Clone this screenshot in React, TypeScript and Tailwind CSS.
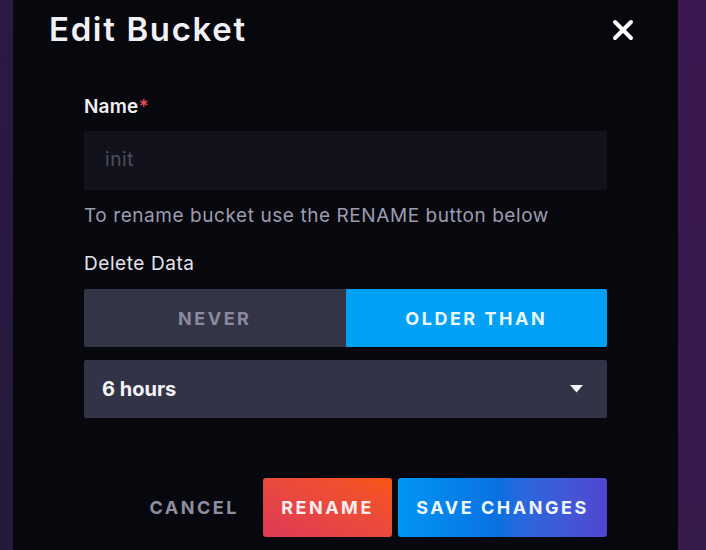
import { X } from 'lucide-react';

const font = { fontFamily: 'Inter, Roboto, "Liberation Sans", sans-serif' };

export default function App() {
  return (
    <div className="flex h-[550px] w-[706px] bg-[#07070e]" style={font}>
      <div className="w-[13px] bg-gradient-to-b from-[#2c1946] to-[#241a3a]" />
      <div className="flex w-[665px] flex-col bg-[#07070e]">
        <div className="flex h-[60px] items-center justify-between pl-[36px] pr-[39px]">
          <h1 className="text-[33px] font-semibold tracking-[0.05em] text-[#f1f1f5]">Edit Bucket</h1>
          <button className="text-white">
            <X className="h-[32px] w-[32px]" strokeWidth={3} />
          </button>
        </div>

        <div className="flex flex-col px-[71px] pt-[35px]">
          <label className="h-[24px] text-[19px] font-semibold leading-[24px] tracking-[0.01em] text-[#f1f1f5]">
            Name<span className="text-[#dc4e58]">*</span>
          </label>
          <div className="mt-[12px] flex h-[59px] items-center rounded-[2px] bg-[#12121c] px-[21px] text-[19px] tracking-[0.03em] text-[#4c4c5e]">
            init
          </div>
          <p className="mt-[14px] h-[24px] text-[19px] leading-[24px] tracking-[0.03em] text-[#9c9cae]">
            To rename bucket use the RENAME button below
          </p>
          <label className="mt-[24px] h-[24px] text-[19px] leading-[24px] tracking-[0.03em] text-[#e4e4ec]">
            Delete Data
          </label>
          <div className="mt-[13px] flex h-[58px] overflow-hidden rounded-[2px]">
            <button className="flex-1 bg-[#343447] text-[18px] font-bold tracking-[0.14em] text-[#8a8a9e]">
              NEVER
            </button>
            <button className="flex-1 bg-[#00a0f7] text-[18px] font-bold tracking-[0.14em] text-[#eaf7ff]">
              OLDER THAN
            </button>
          </div>
          <div className="mt-[13px] flex h-[58px] items-center justify-between rounded-[2px] bg-[#323347] pl-[18px] pr-[24px]">
            <span className="text-[20px] font-bold text-[#f4f4f8]">6 hours</span>
            <svg width="13" height="8" viewBox="0 0 13 8">
              <path d="M0 0 H13 L6.5 7.5 Z" fill="#f4f4f8" />
            </svg>
          </div>

          <div className="mt-[60px] flex h-[59px] items-stretch justify-end gap-[6px]">
            <button className="px-[18px] text-[18px] font-bold tracking-[0.14em] text-[#8e8ea0]">
              CANCEL
            </button>
            <button className="w-[129px] rounded-[3px] bg-gradient-to-tr from-[#dc3a55] to-[#f8560c] text-[18px] font-bold tracking-[0.14em] text-[#fbeef0]">
              RENAME
            </button>
            <button className="w-[209px] rounded-[3px] bg-gradient-to-r from-[#0096f5] via-[#0b6fe0] to-[#4f46d0] text-[18px] font-bold tracking-[0.14em] text-[#eef6ff]">
              SAVE CHANGES
            </button>
          </div>
        </div>
      </div>
      <div className="flex-1 bg-gradient-to-b from-[#3a1750] to-[#351a4c]" />
    </div>
  );
}
